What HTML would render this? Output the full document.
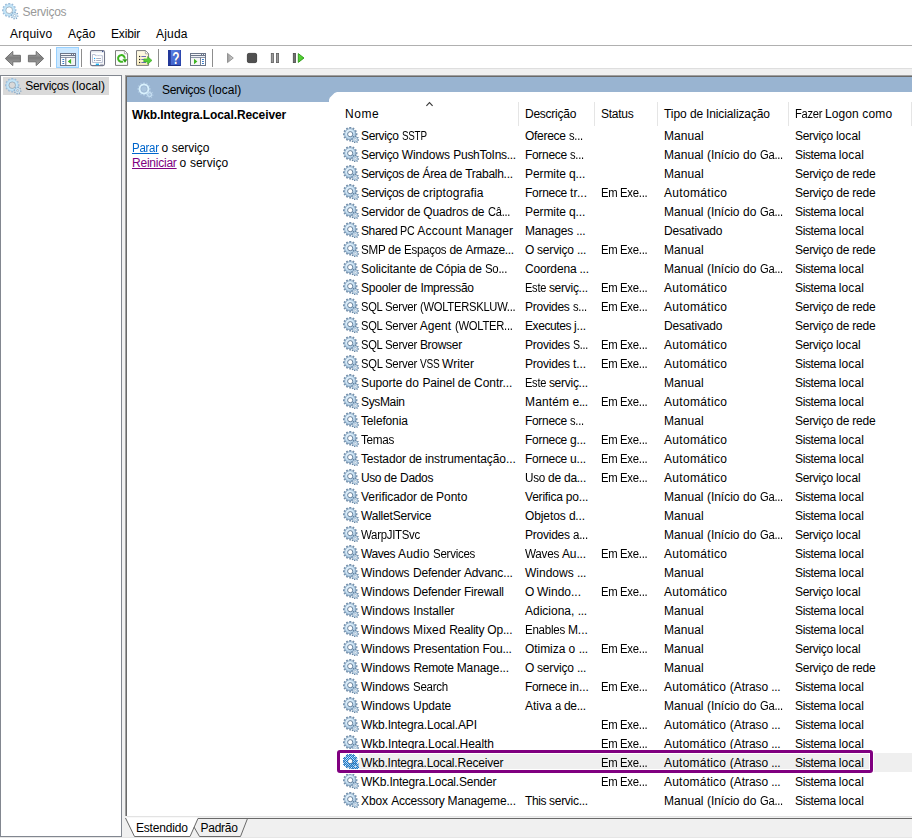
<!DOCTYPE html>
<html lang="pt-BR"><head><meta charset="utf-8"><title>Serviços</title>
<style>
html,body{margin:0;padding:0}
body{width:912px;height:838px;position:relative;overflow:hidden;background:#f0f0f0;font:12px "Liberation Sans",sans-serif;color:#000}
.t{position:absolute;white-space:pre;line-height:16px;height:16px;font-size:12px;transform-origin:0 0}
.t>span{position:absolute;top:0;white-space:pre;transform-origin:0 0}
.abs,.gear,div,svg{position:absolute}
.titlebar{left:0;top:0;width:912px;height:45px;background:#fff}
.menuline{left:0;top:45px;width:912px;height:1px;background:#b0b0b0}
.toolbar{left:0;top:46px;width:912px;height:22px;background:#fff;border-bottom:1px solid #dedede}
.leftpane{left:0;top:75px;width:120px;height:760px;background:#fff;border:1px solid #828790}
.treesel{left:3px;top:77px;width:106px;height:18px;background:#d9d9d9}
.rp-outer{left:125px;top:75px;width:787px;height:741px;background:#a0a0a0}
.rp-inner{left:126px;top:76px;width:786px;height:740px;background:#696969}
.rp{left:127px;top:77px;width:785px;height:739px;background:#fff}
.band{left:127px;top:77px;width:785px;height:25px;background:#99b4d1}
.list{left:329px;top:92px;width:583px;height:724px;background:#fff;clip-path:polygon(0 100%,0 7.5px,1px 5.5px,5.5px 1px,8px 0,100% 0,100% 100%)}
.hsep{top:102px;width:1px;height:24px;background:#e5e5e5}
.selrow{left:359px;width:553px;height:19px;background:#efefef}
.selbox{left:337px;top:750px;width:530px;height:17px;border:3px solid #800080;border-radius:3px;box-shadow:0 0 0 1px #fff,inset 0 0 0 1px #fff}
.tbsep{top:49px;width:1px;height:18px;background:#8d8d8d}
.tbsel{left:56px;top:47px;width:21px;height:19px;background:#cce8ff;border:1px solid #99d1ff}
.lnk{text-decoration:underline}
</style></head><body>
<svg width="0" height="0" style="position:absolute">
<defs>
<radialGradient id="gg" cx="40%" cy="35%" r="70%"><stop offset="0" stop-color="#f2faff"/><stop offset="0.6" stop-color="#c6e0f3"/><stop offset="1" stop-color="#93b0cb"/></radialGradient>
<radialGradient id="gs" cx="40%" cy="35%" r="70%"><stop offset="0" stop-color="#bfe0fb"/><stop offset="0.55" stop-color="#6ea7d8"/><stop offset="1" stop-color="#3f78ad"/></radialGradient>
<g id="teethL"><rect x="-.95" y="-7.2" width="1.9" height="14.4" rx=".2" transform="rotate(0)"/><rect x="-.95" y="-7.2" width="1.9" height="14.4" rx=".2" transform="rotate(30)"/><rect x="-.95" y="-7.2" width="1.9" height="14.4" rx=".2" transform="rotate(60)"/><rect x="-.95" y="-7.2" width="1.9" height="14.4" rx=".2" transform="rotate(90)"/><rect x="-.95" y="-7.2" width="1.9" height="14.4" rx=".2" transform="rotate(120)"/><rect x="-.95" y="-7.2" width="1.9" height="14.4" rx=".2" transform="rotate(150)"/></g>
<g id="teethS"><rect x="-.6" y="-3.9" width="1.2" height="7.8" transform="rotate(10)"/><rect x="-.6" y="-3.9" width="1.2" height="7.8" transform="rotate(55)"/><rect x="-.6" y="-3.9" width="1.2" height="7.8" transform="rotate(100)"/><rect x="-.6" y="-3.9" width="1.2" height="7.8" transform="rotate(145)"/></g>
<g id="gear">
 <g transform="translate(7.2,7.2)"><use href="#teethL" fill="#7490ac"/><circle r="5.6" fill="url(#gg)" stroke="#7f9cb8" stroke-width=".7"/><circle r="2.6" fill="#fff" stroke="#647f9b" stroke-width="1"/></g>
 <g transform="translate(12.2,12.4)"><use href="#teethS" fill="#5f7f9e"/><circle r="2.5" fill="#cfe4f4" stroke="#7f9cb8" stroke-width=".5"/><circle r="1" fill="#fff" stroke="#6f8ba7" stroke-width=".4"/></g>
</g>
<g id="teethLo"><rect x="-.95" y="-7.2" width="1.9" height="2.4" rx=".2" transform="rotate(0)"/><rect x="-.95" y="-7.2" width="1.9" height="2.4" rx=".2" transform="rotate(30)"/><rect x="-.95" y="-7.2" width="1.9" height="2.4" rx=".2" transform="rotate(60)"/><rect x="-.95" y="-7.2" width="1.9" height="2.4" rx=".2" transform="rotate(90)"/><rect x="-.95" y="-7.2" width="1.9" height="2.4" rx=".2" transform="rotate(120)"/><rect x="-.95" y="-7.2" width="1.9" height="2.4" rx=".2" transform="rotate(150)"/><rect x="-.95" y="-7.2" width="1.9" height="2.4" rx=".2" transform="rotate(180)"/><rect x="-.95" y="-7.2" width="1.9" height="2.4" rx=".2" transform="rotate(210)"/><rect x="-.95" y="-7.2" width="1.9" height="2.4" rx=".2" transform="rotate(240)"/><rect x="-.95" y="-7.2" width="1.9" height="2.4" rx=".2" transform="rotate(270)"/><rect x="-.95" y="-7.2" width="1.9" height="2.4" rx=".2" transform="rotate(300)"/><rect x="-.95" y="-7.2" width="1.9" height="2.4" rx=".2" transform="rotate(330)"/></g>
<g id="teethSo"><rect x="-.6" y="-3.9" width="1.2" height="1.7" transform="rotate(10)"/><rect x="-.6" y="-3.9" width="1.2" height="1.7" transform="rotate(55)"/><rect x="-.6" y="-3.9" width="1.2" height="1.7" transform="rotate(100)"/><rect x="-.6" y="-3.9" width="1.2" height="1.7" transform="rotate(145)"/><rect x="-.6" y="-3.9" width="1.2" height="1.7" transform="rotate(190)"/><rect x="-.6" y="-3.9" width="1.2" height="1.7" transform="rotate(235)"/><rect x="-.6" y="-3.9" width="1.2" height="1.7" transform="rotate(280)"/><rect x="-.6" y="-3.9" width="1.2" height="1.7" transform="rotate(325)"/></g>
<g id="gearlite">
 <g transform="translate(7.2,7.2)"><use href="#teethLo" fill="#9dbdd9"/><circle r="4.6" fill="none" stroke="#c3e5f8" stroke-width="2.6"/><circle r="5.8" fill="none" stroke="#a9cbe6" stroke-width=".5"/><circle r="3.3" fill="none" stroke="#76889a" stroke-width=".55"/></g>
 <g transform="translate(12.6,12.6)"><use href="#teethSo" fill="#7fa3c4"/><circle r="1.8" fill="none" stroke="#cfe6f5" stroke-width="1.4"/><circle r="1.1" fill="none" stroke="#7f9bb7" stroke-width=".4"/></g>
</g>
<pattern id="chk" width="2" height="2" patternUnits="userSpaceOnUse"><rect width="1" height="1" fill="#0a7ad8"/><rect x="1" y="1" width="1" height="1" fill="#0a7ad8"/></pattern>
<mask id="gmask"><g fill="#fff" stroke="#fff">
 <g transform="translate(7.2,7.2)"><use href="#teethL"/><circle r="5.6" stroke-width=".7"/><circle r="2.2" fill="#000" stroke="none"/></g>
 <g transform="translate(12.2,12.4)"><use href="#teethS"/><circle r="2.5" stroke-width=".5"/><circle r=".8" fill="#000" stroke="none"/></g></g></mask>
<g id="gearsel"><use href="#gear"/><rect width="16" height="16" fill="url(#chk)" mask="url(#gmask)"/>
</g>
</defs></svg>

<div class="titlebar"></div>
<svg class="gear" style="left:2px;top:3px" width="17" height="17"><use href="#gearlite"/></svg>
<span class="t" style="left:22.6px;top:4.0px;color:#999;letter-spacing:-.30px">Serviços</span>
<span class="t" style="left:10.0px;top:26.0px;letter-spacing:.24px">Arquivo</span>
<span class="t" style="left:68.0px;top:26.0px;letter-spacing:.06px">Ação</span>
<span class="t" style="left:111.0px;top:26.0px;letter-spacing:-.17px">Exibir</span>
<span class="t" style="left:156.0px;top:26.0px;letter-spacing:.18px">Ajuda</span>
<div class="menuline"></div>
<div class="toolbar"></div>
<div class="tbsep" style="left:50px"></div>
<div class="tbsel"></div>
<div class="tbsep" style="left:81px"></div>
<div class="tbsep" style="left:158px"></div>
<div class="tbsep" style="left:212px"></div>
<!--TOOLBARICONS--><svg style="left:0;top:46px" width="320" height="23" viewBox="0 46 320 23">
<defs>
<linearGradient id="ar" x1="0" y1="0" x2="0" y2="1"><stop offset="0" stop-color="#b8b8b8"/><stop offset=".45" stop-color="#7c7c7c"/><stop offset="1" stop-color="#a8a8a8"/></linearGradient>
<linearGradient id="pl" x1="0" y1="0" x2="1" y2="0"><stop offset="0" stop-color="#9a9a9a"/><stop offset="1" stop-color="#d8d8d8"/></linearGradient>
<linearGradient id="gr" x1="0" y1="0" x2="1" y2="1"><stop offset="0" stop-color="#63dd40"/><stop offset="1" stop-color="#3fbf25"/></linearGradient>
<linearGradient id="hb" x1="0" y1="0" x2="1" y2="1"><stop offset="0" stop-color="#5f86e6"/><stop offset="1" stop-color="#3353c0"/></linearGradient>
<linearGradient id="cr" x1="0" y1="0" x2="0" y2="1"><stop offset="0" stop-color="#fffbe8"/><stop offset="1" stop-color="#fbeec0"/></linearGradient>
</defs>
<!-- back / forward -->
<path d="M5.3 58.5 L12.8 51.4 V55.3 H20.4 V61.8 H12.8 V65.6 Z" fill="url(#ar)" stroke="#6f6f6f" stroke-width="1" stroke-linejoin="round"/>
<path d="M43.7 58.5 L36.2 51.4 V55.3 H28.4 V61.8 H36.2 V65.6 Z" fill="url(#ar)" stroke="#6f6f6f" stroke-width="1" stroke-linejoin="round"/>
<!-- show/hide tree (selected) -->
<g>
<rect x="60.5" y="53.5" width="15" height="12" fill="#fff" stroke="#6c7689" stroke-width="1"/>
<rect x="61" y="54" width="14" height="4" fill="#6c7689"/>
<rect x="61" y="54" width="10" height="1" fill="#f4f5f8"/><rect x="72" y="54" width="1" height="1" fill="#f4f5f8"/><rect x="74" y="54" width="1" height="1" fill="#f4f5f8"/>
<rect x="61" y="56" width="14" height="1" fill="#eef0f5"/><rect x="61" y="57" width="14" height="1" fill="#8d96a8"/>
<rect x="65.3" y="57.6" width="1" height="8" fill="#6c7689"/>
<rect x="62.4" y="59" width="1.8" height="1" fill="#3b7dc9"/><rect x="62.4" y="61" width="1.8" height="1" fill="#3b7dc9"/><rect x="62.4" y="63" width="1.8" height="1" fill="#3b7dc9"/>
<rect x="71.5" y="58" width="3.2" height="7" fill="#f1f1f1"/>
<path d="M71.1 58.8 V64 L67.8 61.4 Z" fill="#3cb521"/>
</g>
<!-- properties -->
<g>
<rect x="90.5" y="50.6" width="14" height="15" rx="1.6" fill="#fff" stroke="#73778a" stroke-width="1.1"/>
<rect x="91.3" y="51.4" width="12.4" height="1.3" fill="#e8ebf2"/>
<rect x="102" y="50.8" width="1.3" height="1.3" fill="#41568f"/>
<path d="M92.5 54.5 H95.2 V55.6 H102.4 V62.5 H92.5 Z" fill="#fff" stroke="#b3bbd0" stroke-width=".9"/>
<rect x="96.2" y="54.7" width="2" height="1" fill="#dfe3ee"/><rect x="99.2" y="54.7" width="2" height="1" fill="#dfe3ee"/>
<rect x="94" y="57.9" width="1.2" height="1.2" fill="#11a8ff"/><rect x="96.2" y="58" width="4.8" height="1" fill="#aab0c0"/>
<rect x="94" y="60" width="1.2" height="1.1" fill="#9aa0b0"/><rect x="96.2" y="60" width="4.8" height="1" fill="#aab0c0"/>
<rect x="95.8" y="63.6" width="3.2" height="1.5" fill="#19b4f5"/><rect x="100.2" y="63.8" width="2.8" height="1.2" fill="#b8bcc8"/>
</g>
<!-- refresh -->
<g>
<path d="M115.5 50.6 H124.6 L127.6 53.6 V65.4 H115.5 Z" fill="#fdfdfd" stroke="#7b7b7b" stroke-width="1"/>
<path d="M124.4 50.8 V53.8 H127.4" fill="#fff" stroke="#9a9a9a" stroke-width=".8"/>
<path d="M124.7 58.6 A3.3 3.3 0 1 0 123 61.3" fill="none" stroke="#3db51f" stroke-width="2"/>
<path d="M122.4 59.3 H127.5 L125 62.7 Z" fill="#2d9c12"/>
</g>
<!-- export list -->
<g>
<path d="M136.5 50.6 H145.6 L148.6 53.6 V65.4 H136.5 Z" fill="url(#cr)" stroke="#7b7b7b" stroke-width="1"/>
<path d="M145.4 50.8 V53.8 H148.4" fill="#fff" stroke="#9a9a9a" stroke-width=".8"/>
<rect x="139" y="55.9" width="1.2" height="1.2" fill="#222"/><rect x="139" y="58.9" width="1.2" height="1.2" fill="#222"/><rect x="139" y="61.9" width="1.2" height="1.2" fill="#222"/>
<rect x="141.4" y="56" width="4.6" height="1" fill="#6c6cb8"/><rect x="141.4" y="59" width="4.6" height="1" fill="#6c6cb8"/><rect x="141.4" y="62" width="4.6" height="1" fill="#6c6cb8"/>
<path d="M143.8 58.9 H147.6 V56.6 L152 60.4 L147.6 64.2 V61.9 H143.8 Z" fill="#55cc38" stroke="#3aa822" stroke-width=".6"/>
</g>
<!-- help -->
<g>
<rect x="168" y="50" width="13" height="16" fill="url(#hb)"/>
<rect x="168" y="50" width="2.8" height="16" fill="#22389a"/>
<rect x="168" y="65" width="13" height="1" fill="#1c2f86"/><rect x="180.2" y="50" width=".8" height="16" fill="#2742a8"/>
<g transform="translate(176,63.8) scale(.8,1.06)"><text x=".7" y=".5" text-anchor="middle" font-family="Liberation Sans, sans-serif" font-weight="bold" font-size="15" fill="#1a2d7c" opacity=".55">?</text>
<text x="0" y="0" text-anchor="middle" font-family="Liberation Sans, sans-serif" font-weight="bold" font-size="15" fill="#fff">?</text></g>
</g>
<!-- action pane -->
<g>
<rect x="190.5" y="53.5" width="15" height="12" fill="#fff" stroke="#6c7689" stroke-width="1"/>
<rect x="191" y="54" width="14" height="4" fill="#6c7689"/>
<rect x="191" y="54" width="10" height="1" fill="#f4f5f8"/><rect x="202" y="54" width="1" height="1" fill="#f4f5f8"/><rect x="204" y="54" width="1" height="1" fill="#f4f5f8"/>
<rect x="191" y="56" width="14" height="1" fill="#eef0f5"/><rect x="191" y="57" width="14" height="1" fill="#8d96a8"/>
<rect x="199.9" y="57.6" width="1" height="8" fill="#6c7689"/>
<rect x="202" y="59" width="1.9" height="1" fill="#3b7dc9"/><rect x="202" y="61" width="1.9" height="1" fill="#3b7dc9"/><rect x="202" y="63" width="1.9" height="1" fill="#3b7dc9"/>
<rect x="191.3" y="58" width="8.4" height="7" fill="#f6f6f6"/>
<path d="M194 58.8 V64.2 L197.4 61.5 Z" fill="#3cb521"/>
</g>
<!-- play (disabled) -->
<path d="M227.5 53.4 L233.3 58 L227.5 62.6 Z" fill="url(#pl)" stroke="#8c8c8c" stroke-width=".9" stroke-linejoin="round"/>
<!-- stop -->
<rect x="247.4" y="53.4" width="9.2" height="9.2" rx="1.4" fill="#505050" stroke="#3c3c3c" stroke-width=".9"/>
<!-- pause -->
<rect x="271.3" y="53.4" width="2.2" height="9.2" fill="#9a9a9a" stroke="#606060" stroke-width=".8"/>
<rect x="276.4" y="53.4" width="2.2" height="9.2" fill="#9a9a9a" stroke="#606060" stroke-width=".8"/>
<!-- restart -->
<rect x="293.3" y="53.4" width="2.2" height="9.2" fill="#707070" stroke="#4a4a4a" stroke-width=".8"/>
<path d="M298.3 53.6 L304 58 L298.3 62.4 Z" fill="url(#gr)" stroke="#2a9a14" stroke-width=".9" stroke-linejoin="round"/>
</svg>
<!--/TOOLBARICONS-->

<div class="leftpane"></div>
<div class="treesel"></div>
<svg class="gear" style="left:5px;top:78px" width="17" height="17"><use href="#gearlite"/></svg>
<span class="t" style="left:25.3px;top:78.0px;"><span style="left:0.0px;letter-spacing:-.32px">Serviços </span><span style="left:46.5px;letter-spacing:.10px">(local)</span></span>

<div class="rp-outer"></div><div class="rp-inner"></div><div class="rp"></div>
<div class="band"></div>
<div class="list"></div>
<svg class="gear" style="left:137px;top:82px" width="18" height="18">
 <g transform="translate(7,7)"><use href="#teethL" fill="#b9d3ea" opacity=".55" transform="scale(.93)"/><circle r="4.4" fill="none" stroke="#d9f1fd" stroke-width="2"/><circle r="3.2" fill="none" stroke="#8fa9c6" stroke-width=".6" opacity=".8"/></g>
 <g transform="translate(12.6,12.6)"><use href="#teethS" fill="#c4dcf0" opacity=".6"/><circle r="2" fill="#a9c4de" stroke="#d0e8f8" stroke-width=".9"/></g>
</svg>
<span class="t" style="left:162.0px;top:82.0px;"><span style="left:0.0px;letter-spacing:-.35px">Serviços </span><span style="left:46.2px;letter-spacing:.07px">(local)</span></span>
<span class="t" style="left:132.0px;top:107.0px;font-weight:bold;letter-spacing:-.10px">Wkb.Integra.Local.Receiver</span>
<span class="t lnk" style="left:132.0px;top:140.0px;color:#0066cc;letter-spacing:-.28px;transform:scaleX(0.955)">Parar</span>
<span class="t" style="left:158.5px;top:140.0px;"><span style="left:0.0px;letter-spacing:-.29px"> </span><span style="left:3.1px;letter-spacing:.08px">o </span><span style="left:13.2px;letter-spacing:-.05px">serviço</span></span>
<span class="t lnk" style="left:132.0px;top:155.0px;color:#800080;letter-spacing:-.23px">Reiniciar</span>
<span class="t" style="left:176.5px;top:155.0px;"><span style="left:0.0px;letter-spacing:-.24px"> </span><span style="left:3.1px;letter-spacing:.16px">o </span><span style="left:13.4px;letter-spacing:.03px">serviço</span></span>

<div class="hsep" style="left:518px"></div>
<div class="hsep" style="left:594px"></div>
<div class="hsep" style="left:657px"></div>
<div class="hsep" style="left:788px"></div>
<div class="hsep" style="left:911px"></div>
<svg style="left:425px;top:101px" width="10" height="7"><path d="M1.4 4.8 L4.5 1.6 L7.6 4.8" fill="none" stroke="#3a3a3a" stroke-width="1.15"/></svg>
<span class="t" style="left:345.0px;top:106.0px;letter-spacing:.55px">Nome</span>
<span class="t" style="left:525.0px;top:106.0px;letter-spacing:-.25px">Descrição</span>
<span class="t" style="left:601.0px;top:106.0px;letter-spacing:-.26px">Status</span>
<span class="t" style="left:664.0px;top:106.0px;"><span style="left:0.0px;letter-spacing:-.05px">Tipo </span><span style="left:26.0px;letter-spacing:-.23px">de </span><span style="left:42.0px;letter-spacing:-.11px">Inicialização</span></span>
<span class="t" style="left:795.0px;top:106.0px;"><span style="left:0.0px;letter-spacing:-.28px;transform:scaleX(0.932)">Fazer </span><span style="left:30.1px;letter-spacing:.07px">Logon </span><span style="left:67.3px;letter-spacing:.19px">como</span></span>

<svg class="gear" style="left:343px;top:127px" width="16" height="16"><use href="#gear"/></svg>
<span class="t" style="left:361px;top:128px;"><span style="left:0.0px;letter-spacing:-.36px">Serviço </span><span style="left:40.5px;letter-spacing:-.28px;transform:scaleX(0.817)">SSTP</span></span>
<span class="t" style="left:525px;top:128px;"><span style="left:0.0px;letter-spacing:-.29px">Oferece </span><span style="left:43.7px;letter-spacing:-.28px;transform:scaleX(0.933)">s...</span></span>
<span class="t" style="left:664px;top:128px;letter-spacing:.07px">Manual</span>
<span class="t" style="left:795px;top:128px;"><span style="left:0.0px;letter-spacing:-.30px">Serviço </span><span style="left:40.9px;letter-spacing:.05px">local</span></span>
<svg class="gear" style="left:343px;top:146px" width="16" height="16"><use href="#gear"/></svg>
<span class="t" style="left:361px;top:147px;"><span style="left:0.0px;letter-spacing:-.33px">Serviço </span><span style="left:40.7px;letter-spacing:-.05px">Windows </span><span style="left:92.3px;letter-spacing:-.29px">PushToIns...</span></span>
<span class="t" style="left:525px;top:147px;"><span style="left:0.0px;letter-spacing:-.32px">Fornece </span><span style="left:44.8px;letter-spacing:-.28px;transform:scaleX(0.935)">s...</span></span>
<span class="t" style="left:664px;top:147px;"><span style="left:0.0px;letter-spacing:.03px">Manual </span><span style="left:42.9px;letter-spacing:-.01px">(Início </span><span style="left:78.9px;letter-spacing:.09px">do </span><span style="left:95.8px;letter-spacing:-.28px;transform:scaleX(0.933)">Ga...</span></span>
<span class="t" style="left:795px;top:147px;"><span style="left:0.0px;letter-spacing:-.37px">Sistema </span><span style="left:43.7px;letter-spacing:.14px">local</span></span>
<svg class="gear" style="left:343px;top:165px" width="16" height="16"><use href="#gear"/></svg>
<span class="t" style="left:361px;top:166px;"><span style="left:0.0px;letter-spacing:-.41px">Serviços </span><span style="left:45.7px;letter-spacing:-.27px">de </span><span style="left:61.6px;letter-spacing:-.38px">Área </span><span style="left:88.4px;letter-spacing:-.27px">de </span><span style="left:104.2px;letter-spacing:-.26px">Trabalh...</span></span>
<span class="t" style="left:525px;top:166px;"><span style="left:0.0px;letter-spacing:-.09px">Permite </span><span style="left:43.9px;letter-spacing:-.08px">q...</span></span>
<span class="t" style="left:664px;top:166px;letter-spacing:.07px">Manual</span>
<span class="t" style="left:795px;top:166px;"><span style="left:0.0px;letter-spacing:-.27px">Serviço </span><span style="left:41.2px;letter-spacing:-.20px">de </span><span style="left:57.3px;letter-spacing:-.23px">rede</span></span>
<svg class="gear" style="left:343px;top:184px" width="16" height="16"><use href="#gear"/></svg>
<span class="t" style="left:361px;top:185px;"><span style="left:0.0px;letter-spacing:-.39px">Serviços </span><span style="left:45.9px;letter-spacing:-.24px">de </span><span style="left:61.8px;letter-spacing:.12px">criptografia</span></span>
<span class="t" style="left:525px;top:185px;"><span style="left:0.0px;letter-spacing:-.29px">Fornece </span><span style="left:45.1px;letter-spacing:.07px">tr...</span></span>
<span class="t" style="left:601px;top:185px;"><span style="left:0.0px;letter-spacing:-.28px;transform:scaleX(0.941)">Em </span><span style="left:19.3px;letter-spacing:-.28px;transform:scaleX(0.945)">Exe...</span></span>
<span class="t" style="left:664px;top:185px;letter-spacing:.32px">Automático</span>
<span class="t" style="left:795px;top:185px;"><span style="left:0.0px;letter-spacing:-.27px">Serviço </span><span style="left:41.2px;letter-spacing:-.20px">de </span><span style="left:57.3px;letter-spacing:-.23px">rede</span></span>
<svg class="gear" style="left:343px;top:203px" width="16" height="16"><use href="#gear"/></svg>
<span class="t" style="left:361px;top:204px;"><span style="left:0.0px;letter-spacing:-.20px">Servidor </span><span style="left:46.2px;letter-spacing:-.21px">de </span><span style="left:62.3px;letter-spacing:-.15px">Quadros </span><span style="left:110.4px;letter-spacing:-.21px">de </span><span style="left:126.5px;letter-spacing:-.28px;transform:scaleX(0.923)">Câ...</span></span>
<span class="t" style="left:525px;top:204px;"><span style="left:0.0px;letter-spacing:-.09px">Permite </span><span style="left:43.9px;letter-spacing:-.08px">q...</span></span>
<span class="t" style="left:664px;top:204px;"><span style="left:0.0px;letter-spacing:.03px">Manual </span><span style="left:42.9px;letter-spacing:-.01px">(Início </span><span style="left:78.9px;letter-spacing:.09px">do </span><span style="left:95.8px;letter-spacing:-.28px;transform:scaleX(0.933)">Ga...</span></span>
<span class="t" style="left:795px;top:204px;"><span style="left:0.0px;letter-spacing:-.37px">Sistema </span><span style="left:43.7px;letter-spacing:.14px">local</span></span>
<svg class="gear" style="left:343px;top:222px" width="16" height="16"><use href="#gear"/></svg>
<span class="t" style="left:361px;top:223px;"><span style="left:0.0px;letter-spacing:-.40px">Shared </span><span style="left:39.2px;letter-spacing:-.28px;transform:scaleX(0.892)">PC </span><span style="left:56.3px;letter-spacing:.20px">Account </span><span style="left:104.6px;letter-spacing:-.01px">Manager</span></span>
<span class="t" style="left:525px;top:223px;"><span style="left:0.0px;letter-spacing:-.18px">Manages </span><span style="left:51.3px;letter-spacing:-.32px">...</span></span>
<span class="t" style="left:664px;top:223px;letter-spacing:-.17px">Desativado</span>
<span class="t" style="left:795px;top:223px;"><span style="left:0.0px;letter-spacing:-.37px">Sistema </span><span style="left:43.7px;letter-spacing:.14px">local</span></span>
<svg class="gear" style="left:343px;top:241px" width="16" height="16"><use href="#gear"/></svg>
<span class="t" style="left:361px;top:242px;"><span style="left:0.0px;letter-spacing:-.28px;transform:scaleX(0.969)">SMP </span><span style="left:27.1px;letter-spacing:-.20px">de </span><span style="left:43.2px;letter-spacing:-.28px;transform:scaleX(0.959)">Espaços </span><span style="left:88.4px;letter-spacing:-.20px">de </span><span style="left:104.5px;letter-spacing:-.35px">Armaze...</span></span>
<span class="t" style="left:525px;top:242px;"><span style="left:0.0px;letter-spacing:-.34px">O </span><span style="left:12.0px;letter-spacing:-.17px">serviço </span><span style="left:52.0px;letter-spacing:-.34px">...</span></span>
<span class="t" style="left:601px;top:242px;"><span style="left:0.0px;letter-spacing:-.28px;transform:scaleX(0.941)">Em </span><span style="left:19.3px;letter-spacing:-.28px;transform:scaleX(0.945)">Exe...</span></span>
<span class="t" style="left:664px;top:242px;letter-spacing:.07px">Manual</span>
<span class="t" style="left:795px;top:242px;"><span style="left:0.0px;letter-spacing:-.27px">Serviço </span><span style="left:41.2px;letter-spacing:-.20px">de </span><span style="left:57.3px;letter-spacing:-.23px">rede</span></span>
<svg class="gear" style="left:343px;top:260px" width="16" height="16"><use href="#gear"/></svg>
<span class="t" style="left:361px;top:261px;"><span style="left:0.0px;letter-spacing:-.02px">Solicitante </span><span style="left:58.4px;letter-spacing:-.19px">de </span><span style="left:74.6px;letter-spacing:-.24px">Cópia </span><span style="left:107.8px;letter-spacing:-.19px">de </span><span style="left:123.9px;letter-spacing:-.28px;transform:scaleX(0.952)">So...</span></span>
<span class="t" style="left:525px;top:261px;"><span style="left:0.0px;letter-spacing:-.16px">Coordena </span><span style="left:54.6px;letter-spacing:-.31px">...</span></span>
<span class="t" style="left:664px;top:261px;"><span style="left:0.0px;letter-spacing:.03px">Manual </span><span style="left:42.9px;letter-spacing:-.01px">(Início </span><span style="left:78.9px;letter-spacing:.09px">do </span><span style="left:95.8px;letter-spacing:-.28px;transform:scaleX(0.933)">Ga...</span></span>
<span class="t" style="left:795px;top:261px;"><span style="left:0.0px;letter-spacing:-.37px">Sistema </span><span style="left:43.7px;letter-spacing:.14px">local</span></span>
<svg class="gear" style="left:343px;top:279px" width="16" height="16"><use href="#gear"/></svg>
<span class="t" style="left:361px;top:280px;"><span style="left:0.0px;letter-spacing:-.18px">Spooler </span><span style="left:43.3px;letter-spacing:-.20px">de </span><span style="left:59.4px;letter-spacing:-.30px">Impressão</span></span>
<span class="t" style="left:525px;top:280px;"><span style="left:0.0px;letter-spacing:-.28px;transform:scaleX(0.922)">Este </span><span style="left:23.9px;letter-spacing:-.27px">serviç...</span></span>
<span class="t" style="left:601px;top:280px;"><span style="left:0.0px;letter-spacing:-.28px;transform:scaleX(0.941)">Em </span><span style="left:19.3px;letter-spacing:-.28px;transform:scaleX(0.945)">Exe...</span></span>
<span class="t" style="left:664px;top:280px;letter-spacing:.32px">Automático</span>
<span class="t" style="left:795px;top:280px;"><span style="left:0.0px;letter-spacing:-.37px">Sistema </span><span style="left:43.7px;letter-spacing:.14px">local</span></span>
<svg class="gear" style="left:343px;top:298px" width="16" height="16"><use href="#gear"/></svg>
<span class="t" style="left:361px;top:299px;"><span style="left:0.0px;letter-spacing:-.28px;transform:scaleX(0.925)">SQL </span><span style="left:23.8px;letter-spacing:-.28px;transform:scaleX(0.947)">Server </span><span style="left:58.6px;letter-spacing:-.28px;transform:scaleX(0.933)">(WOLTERSKLUW...</span></span>
<span class="t" style="left:525px;top:299px;"><span style="left:0.0px;letter-spacing:-.26px">Provides </span><span style="left:47.7px;letter-spacing:-.28px;transform:scaleX(0.934)">s...</span></span>
<span class="t" style="left:601px;top:299px;"><span style="left:0.0px;letter-spacing:-.28px;transform:scaleX(0.941)">Em </span><span style="left:19.3px;letter-spacing:-.28px;transform:scaleX(0.945)">Exe...</span></span>
<span class="t" style="left:664px;top:299px;letter-spacing:.32px">Automático</span>
<span class="t" style="left:795px;top:299px;"><span style="left:0.0px;letter-spacing:-.27px">Serviço </span><span style="left:41.2px;letter-spacing:-.20px">de </span><span style="left:57.3px;letter-spacing:-.23px">rede</span></span>
<svg class="gear" style="left:343px;top:317px" width="16" height="16"><use href="#gear"/></svg>
<span class="t" style="left:361px;top:318px;"><span style="left:0.0px;letter-spacing:-.28px;transform:scaleX(0.926)">SQL </span><span style="left:23.9px;letter-spacing:-.28px;transform:scaleX(0.949)">Server </span><span style="left:58.7px;letter-spacing:.02px">Agent </span><span style="left:93.6px;letter-spacing:-.28px;transform:scaleX(0.936)">(WOLTER...</span></span>
<span class="t" style="left:525px;top:318px;"><span style="left:0.0px;letter-spacing:-.41px">Executes </span><span style="left:49.0px;letter-spacing:-.17px">j...</span></span>
<span class="t" style="left:664px;top:318px;letter-spacing:-.17px">Desativado</span>
<span class="t" style="left:795px;top:318px;"><span style="left:0.0px;letter-spacing:-.27px">Serviço </span><span style="left:41.2px;letter-spacing:-.20px">de </span><span style="left:57.3px;letter-spacing:-.23px">rede</span></span>
<svg class="gear" style="left:343px;top:336px" width="16" height="16"><use href="#gear"/></svg>
<span class="t" style="left:361px;top:337px;"><span style="left:0.0px;letter-spacing:-.28px;transform:scaleX(0.930)">SQL </span><span style="left:24.0px;letter-spacing:-.28px;transform:scaleX(0.952)">Server </span><span style="left:58.9px;letter-spacing:-.29px">Browser</span></span>
<span class="t" style="left:525px;top:337px;"><span style="left:0.0px;letter-spacing:-.24px">Provides </span><span style="left:47.8px;letter-spacing:-.28px;transform:scaleX(0.885)">S...</span></span>
<span class="t" style="left:601px;top:337px;"><span style="left:0.0px;letter-spacing:-.28px;transform:scaleX(0.941)">Em </span><span style="left:19.3px;letter-spacing:-.28px;transform:scaleX(0.945)">Exe...</span></span>
<span class="t" style="left:664px;top:337px;letter-spacing:.32px">Automático</span>
<span class="t" style="left:795px;top:337px;"><span style="left:0.0px;letter-spacing:-.30px">Serviço </span><span style="left:40.9px;letter-spacing:.05px">local</span></span>
<svg class="gear" style="left:343px;top:355px" width="16" height="16"><use href="#gear"/></svg>
<span class="t" style="left:361px;top:356px;"><span style="left:0.0px;letter-spacing:-.28px;transform:scaleX(0.932)">SQL </span><span style="left:24.0px;letter-spacing:-.28px;transform:scaleX(0.954)">Server </span><span style="left:59.1px;letter-spacing:-.28px;transform:scaleX(0.840)">VSS </span><span style="left:81.1px;letter-spacing:.04px">Writer</span></span>
<span class="t" style="left:525px;top:356px;"><span style="left:0.0px;letter-spacing:-.23px">Provides </span><span style="left:48.0px;letter-spacing:-.09px">t...</span></span>
<span class="t" style="left:601px;top:356px;"><span style="left:0.0px;letter-spacing:-.28px;transform:scaleX(0.941)">Em </span><span style="left:19.3px;letter-spacing:-.28px;transform:scaleX(0.945)">Exe...</span></span>
<span class="t" style="left:664px;top:356px;letter-spacing:.32px">Automático</span>
<span class="t" style="left:795px;top:356px;"><span style="left:0.0px;letter-spacing:-.37px">Sistema </span><span style="left:43.7px;letter-spacing:.14px">local</span></span>
<svg class="gear" style="left:343px;top:374px" width="16" height="16"><use href="#gear"/></svg>
<span class="t" style="left:361px;top:375px;"><span style="left:0.0px;letter-spacing:-.12px">Suporte </span><span style="left:44.4px;letter-spacing:.15px">do </span><span style="left:61.5px;letter-spacing:-.20px">Painel </span><span style="left:96.8px;letter-spacing:-.18px">de </span><span style="left:113.0px;letter-spacing:-.04px">Contr...</span></span>
<span class="t" style="left:525px;top:375px;"><span style="left:0.0px;letter-spacing:-.28px;transform:scaleX(0.922)">Este </span><span style="left:23.9px;letter-spacing:-.27px">serviç...</span></span>
<span class="t" style="left:664px;top:375px;letter-spacing:.07px">Manual</span>
<span class="t" style="left:795px;top:375px;"><span style="left:0.0px;letter-spacing:-.37px">Sistema </span><span style="left:43.7px;letter-spacing:.14px">local</span></span>
<svg class="gear" style="left:343px;top:393px" width="16" height="16"><use href="#gear"/></svg>
<span class="t" style="left:361px;top:394px;letter-spacing:-.35px">SysMain</span>
<span class="t" style="left:525px;top:394px;"><span style="left:0.0px;letter-spacing:.13px">Mantém </span><span style="left:47.6px;letter-spacing:-.37px">e...</span></span>
<span class="t" style="left:601px;top:394px;"><span style="left:0.0px;letter-spacing:-.28px;transform:scaleX(0.941)">Em </span><span style="left:19.3px;letter-spacing:-.28px;transform:scaleX(0.945)">Exe...</span></span>
<span class="t" style="left:664px;top:394px;letter-spacing:.32px">Automático</span>
<span class="t" style="left:795px;top:394px;"><span style="left:0.0px;letter-spacing:-.37px">Sistema </span><span style="left:43.7px;letter-spacing:.14px">local</span></span>
<svg class="gear" style="left:343px;top:412px" width="16" height="16"><use href="#gear"/></svg>
<span class="t" style="left:361px;top:413px;letter-spacing:-.15px">Telefonia</span>
<span class="t" style="left:525px;top:413px;"><span style="left:0.0px;letter-spacing:-.32px">Fornece </span><span style="left:44.8px;letter-spacing:-.28px;transform:scaleX(0.935)">s...</span></span>
<span class="t" style="left:664px;top:413px;letter-spacing:.07px">Manual</span>
<span class="t" style="left:795px;top:413px;"><span style="left:0.0px;letter-spacing:-.27px">Serviço </span><span style="left:41.2px;letter-spacing:-.20px">de </span><span style="left:57.3px;letter-spacing:-.23px">rede</span></span>
<svg class="gear" style="left:343px;top:431px" width="16" height="16"><use href="#gear"/></svg>
<span class="t" style="left:361px;top:432px;letter-spacing:-.28px;transform:scaleX(0.977)">Temas</span>
<span class="t" style="left:525px;top:432px;"><span style="left:0.0px;letter-spacing:-.29px">Fornece </span><span style="left:45.0px;letter-spacing:-.17px">g...</span></span>
<span class="t" style="left:601px;top:432px;"><span style="left:0.0px;letter-spacing:-.28px;transform:scaleX(0.941)">Em </span><span style="left:19.3px;letter-spacing:-.28px;transform:scaleX(0.945)">Exe...</span></span>
<span class="t" style="left:664px;top:432px;letter-spacing:.32px">Automático</span>
<span class="t" style="left:795px;top:432px;"><span style="left:0.0px;letter-spacing:-.37px">Sistema </span><span style="left:43.7px;letter-spacing:.14px">local</span></span>
<svg class="gear" style="left:343px;top:450px" width="16" height="16"><use href="#gear"/></svg>
<span class="t" style="left:361px;top:451px;"><span style="left:0.0px;letter-spacing:-.16px">Testador </span><span style="left:47.9px;letter-spacing:-.24px">de </span><span style="left:63.9px;letter-spacing:-.07px">instrumentação...</span></span>
<span class="t" style="left:525px;top:451px;"><span style="left:0.0px;letter-spacing:-.29px">Fornece </span><span style="left:45.0px;letter-spacing:-.17px">u...</span></span>
<span class="t" style="left:601px;top:451px;"><span style="left:0.0px;letter-spacing:-.28px;transform:scaleX(0.941)">Em </span><span style="left:19.3px;letter-spacing:-.28px;transform:scaleX(0.945)">Exe...</span></span>
<span class="t" style="left:664px;top:451px;letter-spacing:.32px">Automático</span>
<span class="t" style="left:795px;top:451px;"><span style="left:0.0px;letter-spacing:-.37px">Sistema </span><span style="left:43.7px;letter-spacing:.14px">local</span></span>
<svg class="gear" style="left:343px;top:469px" width="16" height="16"><use href="#gear"/></svg>
<span class="t" style="left:361px;top:470px;"><span style="left:0.0px;letter-spacing:-.41px">Uso </span><span style="left:23.0px;letter-spacing:-.22px">de </span><span style="left:39.1px;letter-spacing:-.33px">Dados</span></span>
<span class="t" style="left:525px;top:470px;"><span style="left:0.0px;letter-spacing:-.28px;transform:scaleX(0.976)">Uso </span><span style="left:23.0px;letter-spacing:-.23px">de </span><span style="left:39.0px;letter-spacing:-.27px">da...</span></span>
<span class="t" style="left:601px;top:470px;"><span style="left:0.0px;letter-spacing:-.28px;transform:scaleX(0.941)">Em </span><span style="left:19.3px;letter-spacing:-.28px;transform:scaleX(0.945)">Exe...</span></span>
<span class="t" style="left:664px;top:470px;letter-spacing:.32px">Automático</span>
<span class="t" style="left:795px;top:470px;"><span style="left:0.0px;letter-spacing:-.30px">Serviço </span><span style="left:40.9px;letter-spacing:.05px">local</span></span>
<svg class="gear" style="left:343px;top:488px" width="16" height="16"><use href="#gear"/></svg>
<span class="t" style="left:361px;top:489px;"><span style="left:0.0px;letter-spacing:-.07px">Verificador </span><span style="left:59.2px;letter-spacing:-.30px">de </span><span style="left:74.9px;letter-spacing:.04px">Ponto</span></span>
<span class="t" style="left:525px;top:489px;"><span style="left:0.0px;letter-spacing:-.21px">Verifica </span><span style="left:40.8px;letter-spacing:-.20px">po...</span></span>
<span class="t" style="left:664px;top:489px;"><span style="left:0.0px;letter-spacing:.03px">Manual </span><span style="left:42.9px;letter-spacing:-.01px">(Início </span><span style="left:78.9px;letter-spacing:.09px">do </span><span style="left:95.8px;letter-spacing:-.28px;transform:scaleX(0.933)">Ga...</span></span>
<span class="t" style="left:795px;top:489px;"><span style="left:0.0px;letter-spacing:-.37px">Sistema </span><span style="left:43.7px;letter-spacing:.14px">local</span></span>
<svg class="gear" style="left:343px;top:507px" width="16" height="16"><use href="#gear"/></svg>
<span class="t" style="left:361px;top:508px;letter-spacing:-.21px">WalletService</span>
<span class="t" style="left:525px;top:508px;"><span style="left:0.0px;letter-spacing:-.11px">Objetos </span><span style="left:43.9px;letter-spacing:-.19px">d...</span></span>
<span class="t" style="left:664px;top:508px;letter-spacing:.07px">Manual</span>
<span class="t" style="left:795px;top:508px;"><span style="left:0.0px;letter-spacing:-.37px">Sistema </span><span style="left:43.7px;letter-spacing:.14px">local</span></span>
<svg class="gear" style="left:343px;top:526px" width="16" height="16"><use href="#gear"/></svg>
<span class="t" style="left:361px;top:527px;letter-spacing:-.28px;transform:scaleX(0.950)">WarpJITSvc</span>
<span class="t" style="left:525px;top:527px;"><span style="left:0.0px;letter-spacing:-.24px">Provides </span><span style="left:47.8px;letter-spacing:-.28px;transform:scaleX(0.960)">a...</span></span>
<span class="t" style="left:664px;top:527px;"><span style="left:0.0px;letter-spacing:.03px">Manual </span><span style="left:42.9px;letter-spacing:-.01px">(Início </span><span style="left:78.9px;letter-spacing:.09px">do </span><span style="left:95.8px;letter-spacing:-.28px;transform:scaleX(0.933)">Ga...</span></span>
<span class="t" style="left:795px;top:527px;"><span style="left:0.0px;letter-spacing:-.30px">Serviço </span><span style="left:40.9px;letter-spacing:.05px">local</span></span>
<svg class="gear" style="left:343px;top:545px" width="16" height="16"><use href="#gear"/></svg>
<span class="t" style="left:361px;top:546px;"><span style="left:0.0px;letter-spacing:-.42px">Waves </span><span style="left:37.1px;letter-spacing:.17px">Audio </span><span style="left:72.1px;letter-spacing:-.28px;transform:scaleX(0.961)">Services</span></span>
<span class="t" style="left:525px;top:546px;"><span style="left:0.0px;letter-spacing:-.28px;transform:scaleX(0.977)">Waves </span><span style="left:37.0px;letter-spacing:-.14px">Au...</span></span>
<span class="t" style="left:601px;top:546px;"><span style="left:0.0px;letter-spacing:-.28px;transform:scaleX(0.941)">Em </span><span style="left:19.3px;letter-spacing:-.28px;transform:scaleX(0.945)">Exe...</span></span>
<span class="t" style="left:664px;top:546px;letter-spacing:.32px">Automático</span>
<span class="t" style="left:795px;top:546px;"><span style="left:0.0px;letter-spacing:-.37px">Sistema </span><span style="left:43.7px;letter-spacing:.14px">local</span></span>
<svg class="gear" style="left:343px;top:564px" width="16" height="16"><use href="#gear"/></svg>
<span class="t" style="left:361px;top:565px;"><span style="left:0.0px;letter-spacing:-.01px">Windows </span><span style="left:52.0px;letter-spacing:-.19px">Defender </span><span style="left:102.9px;letter-spacing:-.12px">Advanc...</span></span>
<span class="t" style="left:525px;top:565px;"><span style="left:0.0px;letter-spacing:0px">Windows </span><span style="left:52.0px;letter-spacing:-.34px">...</span></span>
<span class="t" style="left:664px;top:565px;letter-spacing:.07px">Manual</span>
<span class="t" style="left:795px;top:565px;"><span style="left:0.0px;letter-spacing:-.37px">Sistema </span><span style="left:43.7px;letter-spacing:.14px">local</span></span>
<svg class="gear" style="left:343px;top:583px" width="16" height="16"><use href="#gear"/></svg>
<span class="t" style="left:361px;top:584px;"><span style="left:0.0px;letter-spacing:-.01px">Windows </span><span style="left:52.0px;letter-spacing:-.19px">Defender </span><span style="left:102.9px;letter-spacing:-.17px">Firewall</span></span>
<span class="t" style="left:525px;top:584px;"><span style="left:0.0px;letter-spacing:-.34px">O </span><span style="left:12.0px;letter-spacing:0px">Windo...</span></span>
<span class="t" style="left:601px;top:584px;"><span style="left:0.0px;letter-spacing:-.28px;transform:scaleX(0.941)">Em </span><span style="left:19.3px;letter-spacing:-.28px;transform:scaleX(0.945)">Exe...</span></span>
<span class="t" style="left:664px;top:584px;letter-spacing:.32px">Automático</span>
<span class="t" style="left:795px;top:584px;"><span style="left:0.0px;letter-spacing:-.30px">Serviço </span><span style="left:40.9px;letter-spacing:.05px">local</span></span>
<svg class="gear" style="left:343px;top:602px" width="16" height="16"><use href="#gear"/></svg>
<span class="t" style="left:361px;top:603px;"><span style="left:0.0px;letter-spacing:.03px">Windows </span><span style="left:52.2px;letter-spacing:-.09px">Installer</span></span>
<span class="t" style="left:525px;top:603px;"><span style="left:0.0px;letter-spacing:0px">Adiciona, </span><span style="left:52.7px;letter-spacing:-.36px">...</span></span>
<span class="t" style="left:664px;top:603px;letter-spacing:.07px">Manual</span>
<span class="t" style="left:795px;top:603px;"><span style="left:0.0px;letter-spacing:-.37px">Sistema </span><span style="left:43.7px;letter-spacing:.14px">local</span></span>
<svg class="gear" style="left:343px;top:621px" width="16" height="16"><use href="#gear"/></svg>
<span class="t" style="left:361px;top:622px;"><span style="left:0.0px;letter-spacing:.01px">Windows </span><span style="left:52.1px;letter-spacing:.12px">Mixed </span><span style="left:88.2px;letter-spacing:-.24px">Reality </span><span style="left:126.3px;letter-spacing:-.19px">Op...</span></span>
<span class="t" style="left:525px;top:622px;"><span style="left:0.0px;letter-spacing:-.28px;transform:scaleX(0.964)">Enables </span><span style="left:42.9px;letter-spacing:-.02px">M...</span></span>
<span class="t" style="left:664px;top:622px;letter-spacing:.07px">Manual</span>
<span class="t" style="left:795px;top:622px;"><span style="left:0.0px;letter-spacing:-.37px">Sistema </span><span style="left:43.7px;letter-spacing:.14px">local</span></span>
<svg class="gear" style="left:343px;top:640px" width="16" height="16"><use href="#gear"/></svg>
<span class="t" style="left:361px;top:641px;"><span style="left:0.0px;letter-spacing:.03px">Windows </span><span style="left:52.2px;letter-spacing:-.11px">Presentation </span><span style="left:121.5px;letter-spacing:-.26px">Fou...</span></span>
<span class="t" style="left:525px;top:641px;"><span style="left:0.0px;letter-spacing:-.06px">Otimiza </span><span style="left:43.6px;letter-spacing:.06px">o </span><span style="left:53.7px;letter-spacing:-.30px">...</span></span>
<span class="t" style="left:601px;top:641px;"><span style="left:0.0px;letter-spacing:-.28px;transform:scaleX(0.941)">Em </span><span style="left:19.3px;letter-spacing:-.28px;transform:scaleX(0.945)">Exe...</span></span>
<span class="t" style="left:664px;top:641px;letter-spacing:.07px">Manual</span>
<span class="t" style="left:795px;top:641px;"><span style="left:0.0px;letter-spacing:-.30px">Serviço </span><span style="left:40.9px;letter-spacing:.05px">local</span></span>
<svg class="gear" style="left:343px;top:659px" width="16" height="16"><use href="#gear"/></svg>
<span class="t" style="left:361px;top:660px;"><span style="left:0.0px;letter-spacing:.05px">Windows </span><span style="left:52.4px;letter-spacing:-.29px">Remote </span><span style="left:95.7px;letter-spacing:-.11px">Manage...</span></span>
<span class="t" style="left:525px;top:660px;"><span style="left:0.0px;letter-spacing:-.34px">O </span><span style="left:12.0px;letter-spacing:-.17px">serviço </span><span style="left:52.0px;letter-spacing:-.34px">...</span></span>
<span class="t" style="left:664px;top:660px;letter-spacing:.07px">Manual</span>
<span class="t" style="left:795px;top:660px;"><span style="left:0.0px;letter-spacing:-.27px">Serviço </span><span style="left:41.2px;letter-spacing:-.20px">de </span><span style="left:57.3px;letter-spacing:-.23px">rede</span></span>
<svg class="gear" style="left:343px;top:678px" width="16" height="16"><use href="#gear"/></svg>
<span class="t" style="left:361px;top:679px;"><span style="left:0.0px;letter-spacing:-.02px">Windows </span><span style="left:51.8px;letter-spacing:-.28px;transform:scaleX(0.960)">Search</span></span>
<span class="t" style="left:525px;top:679px;"><span style="left:0.0px;letter-spacing:-.32px">Fornece </span><span style="left:44.8px;letter-spacing:-.09px">in...</span></span>
<span class="t" style="left:601px;top:679px;"><span style="left:0.0px;letter-spacing:-.28px;transform:scaleX(0.941)">Em </span><span style="left:19.3px;letter-spacing:-.28px;transform:scaleX(0.945)">Exe...</span></span>
<span class="t" style="left:664px;top:679px;"><span style="left:0.0px;letter-spacing:.22px">Automático </span><span style="left:65.8px;letter-spacing:-.06px">(Atraso </span><span style="left:107.3px;letter-spacing:-.30px">...</span></span>
<span class="t" style="left:795px;top:679px;"><span style="left:0.0px;letter-spacing:-.37px">Sistema </span><span style="left:43.7px;letter-spacing:.14px">local</span></span>
<svg class="gear" style="left:343px;top:697px" width="16" height="16"><use href="#gear"/></svg>
<span class="t" style="left:361px;top:698px;"><span style="left:0.0px;letter-spacing:.01px">Windows </span><span style="left:52.1px;letter-spacing:-.10px">Update</span></span>
<span class="t" style="left:525px;top:698px;"><span style="left:0.0px;letter-spacing:-.02px">Ativa </span><span style="left:29.9px;letter-spacing:-.28px;transform:scaleX(0.949)">a </span><span style="left:38.9px;letter-spacing:-.29px">de...</span></span>
<span class="t" style="left:664px;top:698px;"><span style="left:0.0px;letter-spacing:.03px">Manual </span><span style="left:42.9px;letter-spacing:-.01px">(Início </span><span style="left:78.9px;letter-spacing:.09px">do </span><span style="left:95.8px;letter-spacing:-.28px;transform:scaleX(0.933)">Ga...</span></span>
<span class="t" style="left:795px;top:698px;"><span style="left:0.0px;letter-spacing:-.37px">Sistema </span><span style="left:43.7px;letter-spacing:.14px">local</span></span>
<svg class="gear" style="left:343px;top:716px" width="16" height="16"><use href="#gear"/></svg>
<span class="t" style="left:361px;top:717px;letter-spacing:-.17px">Wkb.Integra.Local.API</span>
<span class="t" style="left:601px;top:717px;"><span style="left:0.0px;letter-spacing:-.28px;transform:scaleX(0.941)">Em </span><span style="left:19.3px;letter-spacing:-.28px;transform:scaleX(0.945)">Exe...</span></span>
<span class="t" style="left:664px;top:717px;"><span style="left:0.0px;letter-spacing:.22px">Automático </span><span style="left:65.8px;letter-spacing:-.06px">(Atraso </span><span style="left:107.3px;letter-spacing:-.30px">...</span></span>
<span class="t" style="left:795px;top:717px;"><span style="left:0.0px;letter-spacing:-.37px">Sistema </span><span style="left:43.7px;letter-spacing:.14px">local</span></span>
<svg class="gear" style="left:343px;top:735px" width="16" height="16"><use href="#gear"/></svg>
<span class="t" style="left:361px;top:736px;letter-spacing:-.08px">Wkb.Integra.Local.Health</span>
<span class="t" style="left:601px;top:736px;"><span style="left:0.0px;letter-spacing:-.28px;transform:scaleX(0.941)">Em </span><span style="left:19.3px;letter-spacing:-.28px;transform:scaleX(0.945)">Exe...</span></span>
<span class="t" style="left:664px;top:736px;"><span style="left:0.0px;letter-spacing:.22px">Automático </span><span style="left:65.8px;letter-spacing:-.06px">(Atraso </span><span style="left:107.3px;letter-spacing:-.30px">...</span></span>
<span class="t" style="left:795px;top:736px;"><span style="left:0.0px;letter-spacing:-.37px">Sistema </span><span style="left:43.7px;letter-spacing:.14px">local</span></span>
<div class="selrow" style="top:753px"></div>
<svg class="gear" style="left:343px;top:754px" width="16" height="16"><use href="#gearsel"/></svg>
<span class="t" style="left:361px;top:755px;letter-spacing:-.20px">Wkb.Integra.Local.Receiver</span>
<span class="t" style="left:601px;top:755px;"><span style="left:0.0px;letter-spacing:-.28px;transform:scaleX(0.941)">Em </span><span style="left:19.3px;letter-spacing:-.28px;transform:scaleX(0.945)">Exe...</span></span>
<span class="t" style="left:664px;top:755px;"><span style="left:0.0px;letter-spacing:.22px">Automático </span><span style="left:65.8px;letter-spacing:-.06px">(Atraso </span><span style="left:107.3px;letter-spacing:-.30px">...</span></span>
<span class="t" style="left:795px;top:755px;"><span style="left:0.0px;letter-spacing:-.37px">Sistema </span><span style="left:43.7px;letter-spacing:.14px">local</span></span>
<svg class="gear" style="left:343px;top:773px" width="16" height="16"><use href="#gear"/></svg>
<span class="t" style="left:361px;top:774px;letter-spacing:-.23px">WKb.Integra.Local.Sender</span>
<span class="t" style="left:601px;top:774px;"><span style="left:0.0px;letter-spacing:-.28px;transform:scaleX(0.941)">Em </span><span style="left:19.3px;letter-spacing:-.28px;transform:scaleX(0.945)">Exe...</span></span>
<span class="t" style="left:664px;top:774px;"><span style="left:0.0px;letter-spacing:.22px">Automático </span><span style="left:65.8px;letter-spacing:-.06px">(Atraso </span><span style="left:107.3px;letter-spacing:-.30px">...</span></span>
<span class="t" style="left:795px;top:774px;"><span style="left:0.0px;letter-spacing:-.37px">Sistema </span><span style="left:43.7px;letter-spacing:.14px">local</span></span>
<svg class="gear" style="left:343px;top:792px" width="16" height="16"><use href="#gear"/></svg>
<span class="t" style="left:361px;top:793px;"><span style="left:0.0px;letter-spacing:-.10px">Xbox </span><span style="left:30.2px;letter-spacing:-.23px">Accessory </span><span style="left:86.6px;letter-spacing:-.15px">Manageme...</span></span>
<span class="t" style="left:525px;top:793px;"><span style="left:0.0px;letter-spacing:-.41px">This </span><span style="left:24.0px;letter-spacing:-.27px">servic...</span></span>
<span class="t" style="left:664px;top:793px;"><span style="left:0.0px;letter-spacing:.03px">Manual </span><span style="left:42.9px;letter-spacing:-.01px">(Início </span><span style="left:78.9px;letter-spacing:.09px">do </span><span style="left:95.8px;letter-spacing:-.28px;transform:scaleX(0.933)">Ga...</span></span>
<span class="t" style="left:795px;top:793px;"><span style="left:0.0px;letter-spacing:-.37px">Sistema </span><span style="left:43.7px;letter-spacing:.14px">local</span></span>
<div class="selbox"></div>
<!-- bottom tabs -->
<div style="left:0;top:837px;width:912px;height:1px;background:#e6e6e6"></div>
<div style="left:127px;top:816px;width:785px;height:1px;background:#e3e3e3"></div>
<svg style="left:120px;top:816px" width="792" height="22">
 <polygon points="6,1.5 77.5,1.5 70,20.5 14.5,20.5" fill="#fff"/>
 <path d="M5.5 2 L14.5 20.5 H70 L78 2.5 H792" fill="none" stroke="#696969" stroke-width="1"/>
 <path d="M74 11 L79.5 20.5 H120.5 L127.5 2.5" fill="none" stroke="#696969" stroke-width="1"/>
</svg>
<span class="t" style="left:136.0px;top:820.0px;letter-spacing:-.19px">Estendido</span>
<span class="t" style="left:200.4px;top:820.0px;letter-spacing:-.22px">Padrão</span>
</body></html>
